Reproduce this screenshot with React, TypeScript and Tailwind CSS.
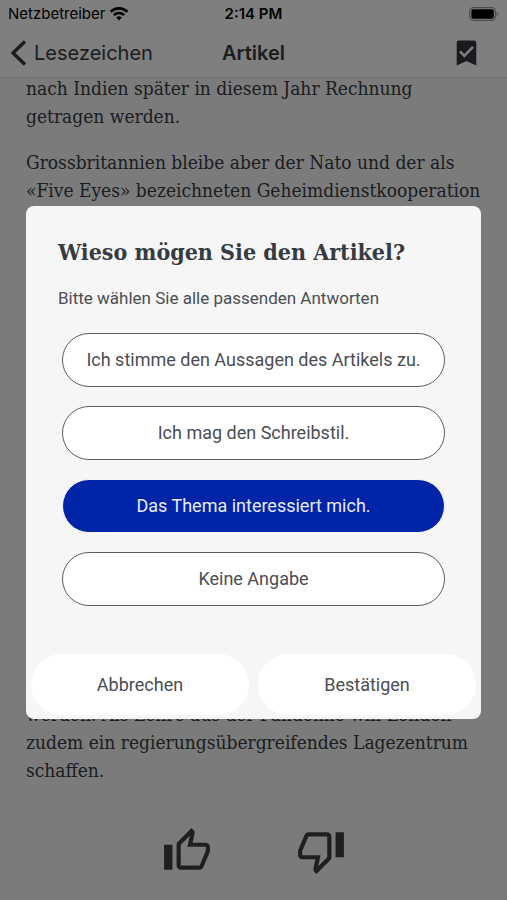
import { useState } from "react";

const options = [
  "Ich stimme den Aussagen des Artikels zu.",
  "Ich mag den Schreibstil.",
  "Das Thema interessiert mich.",
  "Keine Angabe",
];

const slab = "font-['Roboto_Slab','DejaVu_Serif_Condensed','DejaVu_Serif',serif]";

function StatusBar() {
  return (
    <div className="grid grid-cols-3 items-center h-7 px-2 text-[15px] text-black">
      <div className="flex items-center gap-1">
        <span>Netzbetreiber</span>
        <svg width="20" height="14" viewBox="0 0 20 14" aria-hidden="true">
          <path d="M10 13.6 7.2 10.5a4 4 0 0 1 5.6 0Z" fill="#000" />
          <path
            d="M4.9 8.1a7.3 7.3 0 0 1 10.2 0M1.6 4.8a12 12 0 0 1 16.8 0"
            fill="none"
            stroke="#000"
            strokeWidth="2.7"
          />
        </svg>
      </div>
      <span className="text-center font-semibold">2:14 PM</span>
      <svg className="justify-self-end" width="30" height="14" viewBox="0 0 30 14" aria-hidden="true">
        <rect x="0.8" y="0.6" width="25.6" height="12.8" rx="3.6" fill="none" stroke="#000" strokeOpacity="0.4" strokeWidth="1.2" />
        <rect x="2.4" y="2.2" width="22.4" height="9.6" rx="2" fill="#000" />
        <path d="M27.6 4.8v4.4c2.2-.8 2.2-3.6 0-4.4Z" fill="#000" fillOpacity="0.4" />
      </svg>
    </div>
  );
}

function NavBar() {
  return (
    <div className="grid grid-cols-3 items-center h-[49px] px-[10px] text-[#363b42]">
      <button type="button" className="flex items-center gap-[7px] text-xl">
        <svg width="17" height="26" viewBox="0 0 17 26" aria-hidden="true">
          <path d="M15 1.5 3 13l12 11.5" fill="none" stroke="currentColor" strokeWidth="3.4" />
        </svg>
        Lesezeichen
      </button>
      <h1 className="text-center text-xl font-semibold">Artikel</h1>
      <button type="button" aria-label="Lesezeichen entfernen" className="justify-self-end mr-5">
        <svg width="21" height="26" viewBox="0 0 21 26" aria-hidden="true">
          <path d="M3 .5h15a2.3 2.3 0 0 1 2.3 2.3v22.7l-9.8-4.6-9.8 4.6V2.8A2.3 2.3 0 0 1 3 .5Z" fill="#30353c" />
          <path d="m4 11.4 4.3 4.4 8.7-9" fill="none" stroke="#fff" strokeWidth="2.6" />
        </svg>
      </button>
    </div>
  );
}

function Article() {
  return (
    <main className={`${slab} px-[26px] -mt-[5px] text-[19px] leading-[28px] text-[#363a3f] whitespace-nowrap`}>
      <p>
        nach Indien später in diesem Jahr Rechnung
        <br />
        getragen werden.
      </p>
      <p className="mt-[18px]">
        Grossbritannien bleibe aber der Nato und der als
        <br />
        «Five Eyes» bezeichneten Geheimdienstkooperation
      </p>
      <p className="mt-[496px]">
        werden. Als Lehre aus der Pandemie will London
        <br />
        zudem ein regierungsübergreifendes Lagezentrum
        <br />
        schaffen.
      </p>
    </main>
  );
}

function Rating() {
  return (
    <div className="flex justify-center gap-[84px] mt-[42px] pb-[22px] text-[#3a3f42]">
      <button type="button" aria-label="Artikel gefällt mir">
        <svg width="50" height="50" viewBox="0 0 24 24" fill="currentColor" aria-hidden="true">
          <path d="M5,9V21H1V9H5M9,21A2,2 0 0,1 7,19V9C7,8.45 7.22,7.95 7.59,7.59L14.17,1L15.23,2.06C15.5,2.33 15.67,2.7 15.67,3.11L15.64,3.43L14.69,8H21C22.11,8 23,8.9 23,10V12C23,12.26 22.95,12.5 22.86,12.73L19.84,19.78C19.54,20.5 18.83,21 18,21H9M9,19H18.03L21,12V10H12.21L13.34,4.68L9,9.03V19Z" />
        </svg>
      </button>
      <button type="button" aria-label="Artikel gefällt mir nicht">
        <svg width="50" height="50" viewBox="0 0 24 24" fill="currentColor" aria-hidden="true">
          <path d="M19,15V3H23V15H19M15,3A2,2 0 0,1 17,5V15C17,15.55 16.78,16.05 16.41,16.41L9.83,23L8.77,21.94C8.5,21.67 8.33,21.3 8.33,20.88L8.36,20.57L9.31,16H3C1.89,16 1,15.1 1,14V12C1,11.74 1.05,11.5 1.14,11.27L4.16,4.22C4.46,3.5 5.17,3 6,3H15M15,5H5.97L3,12V14H11.78L10.65,19.32L15,14.97V5Z" />
        </svg>
      </button>
    </div>
  );
}

export default function App() {
  const [selected, setSelected] = useState<string[]>(["Das Thema interessiert mich."]);

  const toggle = (option: string) => {
    setSelected((prev) =>
      prev.includes(option) ? prev.filter((o) => o !== option) : [...prev, option],
    );
  };

  return (
    <div className="relative min-h-screen bg-[#f6f6f6] font-[Inter,'Liberation_Sans',sans-serif]">
      <header className="bg-white border-b-2 border-[#eeeeee]">
        <StatusBar />
        <NavBar />
      </header>
      <Article />
      <Rating />

      {/* feedback dialog */}
      <div className="absolute inset-0 flex items-center justify-center bg-black/50 px-[26px] pt-[25px]">
        <div
          role="dialog"
          aria-modal="true"
          aria-labelledby="dialog-title"
          className="w-full rounded-lg bg-[#f6f6f6] pt-7 text-[#4a4e54]"
        >
          <div className="px-8">
            <h2 id="dialog-title" className={`${slab} text-[23px] leading-9 font-bold text-[#363b42] whitespace-nowrap`}>
              Wieso mögen Sie den Artikel?
            </h2>
            <p className="mt-4 font-[Roboto,sans-serif] text-[17px] leading-6">
              Bitte wählen Sie alle passenden Antworten
            </p>
          </div>

          <div className="flex flex-col gap-[19px] mt-[23px] px-9 font-[Roboto,sans-serif] text-lg">
            {options.map((option) => (
              <button
                key={option}
                type="button"
                aria-pressed={selected.includes(option)}
                onClick={() => toggle(option)}
                className={`h-[54px] rounded-full border whitespace-nowrap ${
                  selected.includes(option)
                    ? "border-[#f6f6f6] bg-[#0024a8] text-[#e8ebf8]"
                    : "border-[#5c5e62] bg-white"
                }`}
              >
                {option}
              </button>
            ))}
          </div>

          <div className="grid grid-cols-2 gap-[9px] mt-12 px-[5px] pb-1 font-[Roboto,sans-serif] text-lg">
            <button type="button" className="h-[61px] rounded-full bg-white">
              Abbrechen
            </button>
            <button type="button" className="h-[61px] rounded-full bg-white">
              Bestätigen
            </button>
          </div>
        </div>
      </div>
    </div>
  );
}
